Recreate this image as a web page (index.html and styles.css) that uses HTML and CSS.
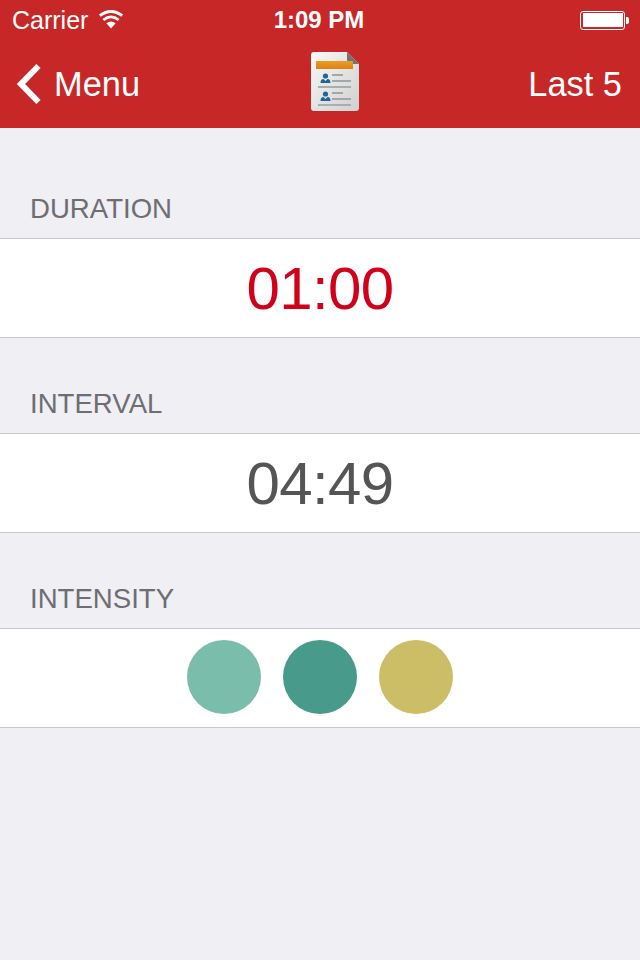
FILE: index.html
```html
<!DOCTYPE html>
<html lang="en">
  <head>
    <meta charset="UTF-8" />
    <meta name="viewport" content="width=device-width, initial-scale=1.0" />
    <title>Last 5</title>
    <link rel="stylesheet" href="styles.css">
  </head>
  <body>
    <header class="header">
      <div class="status-bar">
        <div class="status-left">
          <span>Carrier</span>
          <svg class="wifi" width="26" height="20" viewBox="0 0 26 20">
            <path d="M13 18.4 L8.4 13.2 Q13 9.6 17.6 13.2 Z" fill="#fff" />
            <path d="M5.4 10 Q13 3.8 20.6 10" fill="none" stroke="#fff" stroke-width="2.8" />
            <path d="M1.8 5.6 Q13 -2.6 24.2 5.6" fill="none" stroke="#fff" stroke-width="2.8" />
          </svg>
        </div>
        <div class="status-time">1:09 PM</div>
        <div class="status-right">
          <div class="battery"><div class="battery-fill"></div></div>
          <div class="battery-tip"></div>
        </div>
      </div>
      <nav class="nav-bar">
        <a class="nav-back">
          <svg width="26" height="42" viewBox="0 0 26 42">
            <path d="M22.5 3 L5 21 L22.5 39" fill="none" stroke="#fff" stroke-width="6" />
          </svg>
          <span>Menu</span>
        </a>
        <svg class="nav-icon" width="50" height="61" viewBox="0 0 50 61">
          <defs>
            <linearGradient id="paper" x1="0" y1="0" x2="1" y2="1">
              <stop offset="0" stop-color="#f8f8f8" />
              <stop offset="1" stop-color="#d0d0ce" />
            </linearGradient>
            <linearGradient id="tab" x1="0" y1="0" x2="0" y2="1">
              <stop offset="0" stop-color="#ee9d22" />
              <stop offset="1" stop-color="#dc8116" />
            </linearGradient>
          </defs>
          <path d="M4 1 H37 L49 13 V57 a3 3 0 0 1 -3 3 H4 a3 3 0 0 1 -3 -3 V4 a3 3 0 0 1 3 -3 Z" fill="url(#paper)" />
          <path d="M37 1 L49 13 H41 a4 4 0 0 1 -4 -4 Z" fill="#6f7472" />
          <rect x="6" y="10" width="37" height="8" fill="url(#tab)" />
          <circle cx="15.5" cy="25" r="2.6" fill="#1f659c" />
          <path d="M10.5 32 Q10.5 28 13.5 28 L15.5 30 L17.5 28 Q20.5 28 20.5 32 Z" fill="#1f659c" />
          <rect x="22" y="23" width="11" height="2" fill="#a0a8ac" />
          <rect x="22" y="29" width="19" height="2" fill="#a0a8ac" />
          <rect x="8" y="35" width="33" height="2" fill="#a6aeb2" />
          <circle cx="15.5" cy="43" r="2.6" fill="#1f659c" />
          <path d="M10.5 50 Q10.5 46 13.5 46 L15.5 48 L17.5 46 Q20.5 46 20.5 50 Z" fill="#1f659c" />
          <rect x="22" y="41" width="11" height="2" fill="#a0a8ac" />
          <rect x="22" y="47" width="19" height="2" fill="#a0a8ac" />
          <rect x="8" y="53" width="33" height="2" fill="#a6aeb2" />
        </svg>
        <a class="nav-action">Last 5</a>
      </nav>
    </header>

    <main class="content">
      <section class="group">
        <h2 class="group-label">DURATION</h2>
        <div class="group-row time time-red">01:00</div>
      </section>
      <section class="group">
        <h2 class="group-label">INTERVAL</h2>
        <div class="group-row time">04:49</div>
      </section>
      <section class="group">
        <h2 class="group-label">INTENSITY</h2>
        <div class="group-row dots">
          <div class="dot dot-light"></div>
          <div class="dot dot-dark"></div>
          <div class="dot dot-yellow"></div>
        </div>
      </section>
    </main>
  </body>
</html>
```

FILE: styles.css
```css
html,
body {
  height: 100%;
}
body {
  font-family: "Liberation Sans", Arial, sans-serif;
  margin: 0;
  height: 960px;
  overflow: hidden;
  background-color: #efeff4;
}
.header {
  height: 128px;
  background-color: #c72727;
  color: #fff;
}
.status-bar {
  position: relative;
  display: flex;
  justify-content: space-between;
  align-items: center;
  height: 40px;
  padding: 0 11px 0 12px;
  font-size: 25px;
}
.status-left {
  display: flex;
  align-items: center;
  gap: 10px;
}
.status-time {
  position: absolute;
  left: 0;
  right: 0;
  text-align: center;
  font-weight: bold;
  font-size: 24px;
  margin-left: -2px;
}
.status-right {
  display: flex;
  align-items: center;
}
.battery {
  box-sizing: border-box;
  width: 45px;
  height: 19px;
  border: 1.5px solid #fff;
  border-radius: 3px;
  padding: 1.5px;
}
.battery-fill {
  height: 100%;
  background-color: #fff;
}
.battery-tip {
  width: 3px;
  height: 7px;
  margin-left: 1px;
  background-color: #fff;
  border-radius: 0 2px 2px 0;
}
.nav-bar {
  display: flex;
  justify-content: space-between;
  align-items: center;
  position: relative;
  height: 88px;
  padding: 0 18px 0 16px;
  font-size: 34.4px;
}
.nav-back {
  display: flex;
  align-items: center;
  gap: 12px;
}
.nav-icon {
  position: absolute;
  left: 310px;
  top: 11px;
}
.group-label {
  display: flex;
  align-items: flex-end;
  box-sizing: border-box;
  height: 95px;
  margin: 0;
  padding: 0 0 13px 30px;
  font-size: 27.6px;
  line-height: 32px;
  font-weight: normal;
  color: #6d6d72;
}
.group:first-child .group-label {
  height: 110px;
}
.group-row {
  box-sizing: border-box;
  height: 100px;
  background-color: #fff;
  border-top: 1px solid #c8c7cc;
  border-bottom: 1px solid #c8c7cc;
}
.time {
  font-size: 60px;
  line-height: 100px;
  text-align: center;
  letter-spacing: -0.6px;
  color: #555;
}
.time-red {
  color: #d0021b;
}
.dots {
  display: flex;
  justify-content: center;
  gap: 22px;
  padding-top: 11px;
}
.dot {
  width: 74px;
  height: 74px;
  border-radius: 50%;
}
.dot-light {
  background-color: #7abdaa;
}
.dot-dark {
  background-color: #489b8b;
}
.dot-yellow {
  background-color: #cbbe66;
}
```
